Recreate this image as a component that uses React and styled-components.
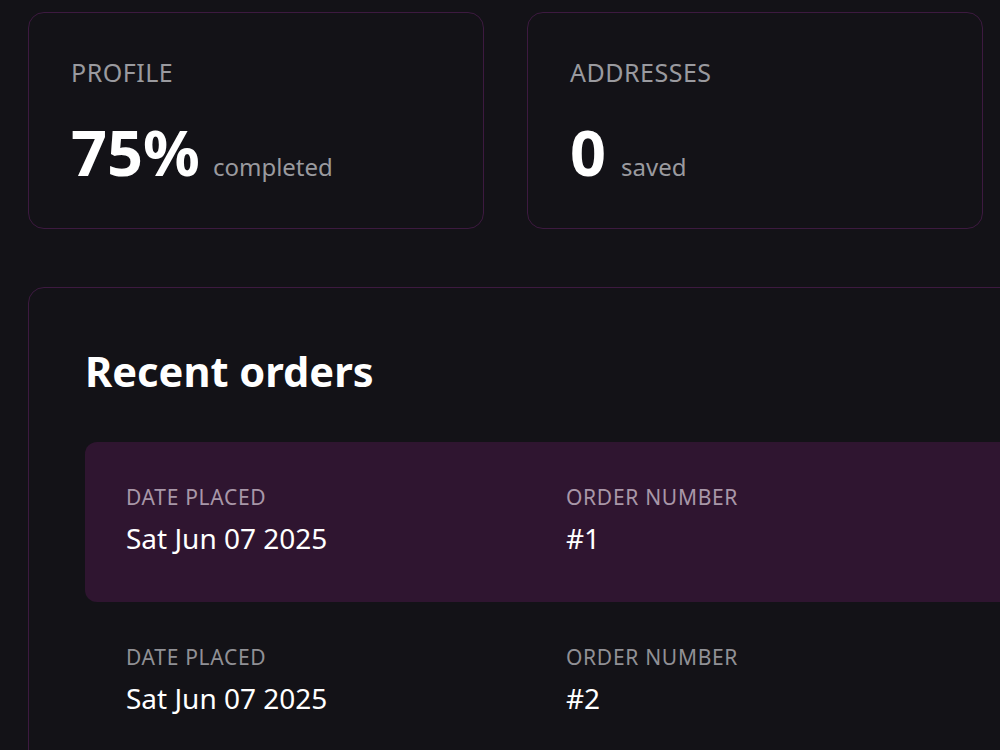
import React from "react";
import styled, { createGlobalStyle } from "styled-components";

const GlobalStyle = createGlobalStyle`
  html, body {
    margin: 0;
    padding: 0;
    background: #131217;
    overflow: hidden;
  }
  body {
    font-family: "Noto Sans", "Open Sans", sans-serif;
    color: #ffffff;
  }
`;

const orders = [
  { date: "Sat Jun 07 2025", number: "#1" },
  { date: "Sat Jun 07 2025", number: "#2" },
];

function App() {
  return (
    <Page>
      <GlobalStyle />
      <Stats>
        <StatCard>
          <StatLabel>PROFILE</StatLabel>
          <StatValue>
            <Big>75%</Big>
            <Small>completed</Small>
          </StatValue>
        </StatCard>
        <StatCard>
          <StatLabel>ADDRESSES</StatLabel>
          <StatValue>
            <Big>0</Big>
            <Small $gap={15}>saved</Small>
          </StatValue>
        </StatCard>
      </Stats>

      <OrdersCard>
        <Title>Recent orders</Title>
        <OrderList>
          {orders.map((o, i) => (
            <OrderRow key={o.number} $active={i === 0}>
              <Field>
                <FieldLabel $active={i === 0}>DATE PLACED</FieldLabel>
                <FieldValue>{o.date}</FieldValue>
              </Field>
              <Field>
                <FieldLabel $active={i === 0}>ORDER NUMBER</FieldLabel>
                <FieldValue>{o.number}</FieldValue>
              </Field>
            </OrderRow>
          ))}
        </OrderList>
      </OrdersCard>
    </Page>
  );
}

const Page = styled.div`
  padding: 12px 0 0 28px;
  display: flex;
  flex-direction: column;
  gap: 58px;
  width: 1500px;
`;

const Stats = styled.div`
  display: grid;
  grid-template-columns: 456px 456px;
  gap: 43px;
`;

const StatCard = styled.div`
  box-sizing: border-box;
  height: 217px;
  border: 1px solid #3d1a40;
  border-radius: 16px;
  background: #131217;
  padding: 41px 42px 40px;
  display: flex;
  flex-direction: column;
  gap: 22px;
`;

const StatLabel = styled.div`
  font-size: 25px;
  line-height: 1.5;
  letter-spacing: 0.5px;
  color: #9a9a9f;
`;

const StatValue = styled.div`
  display: flex;
  align-items: baseline;
`;

const Big = styled.span`
  font-size: 63px;
  line-height: 1.2;
  font-weight: 700;
  color: #ffffff;
`;

const Small = styled.span`
  margin-left: ${(p) => p.$gap || 13}px;
  font-size: 24px;
  color: #9a9a9f;
`;

const OrdersCard = styled.div`
  box-sizing: border-box;
  width: 1400px;
  border: 1px solid #3d1a40;
  border-radius: 16px;
  padding: 59px 56px 57px;
  display: flex;
  flex-direction: column;
  gap: 45px;
`;

const Title = styled.h2`
  margin: 0;
  font-size: 41.6px;
  line-height: 1.2;
  font-weight: 700;
`;

const OrderList = styled.div`
  display: flex;
  flex-direction: column;
`;

const OrderRow = styled.div`
  box-sizing: border-box;
  height: 160px;
  display: grid;
  grid-template-columns: 440px 440px 1fr;
  padding: 40px 41px 0;
  border-radius: 12px;
  background: ${(p) => (p.$active ? "#2f1530" : "transparent")};
`;

const Field = styled.div`
  display: flex;
  flex-direction: column;
  gap: 4px;
`;

const FieldLabel = styled.div`
  font-size: 21px;
  line-height: 1.5;
  letter-spacing: 0.7px;
  color: ${(p) => (p.$active ? "#a897a8" : "#909095")};
`;

const FieldValue = styled.div`
  font-size: 28px;
  line-height: 1.5;
  color: #ffffff;
`;

export default App;
